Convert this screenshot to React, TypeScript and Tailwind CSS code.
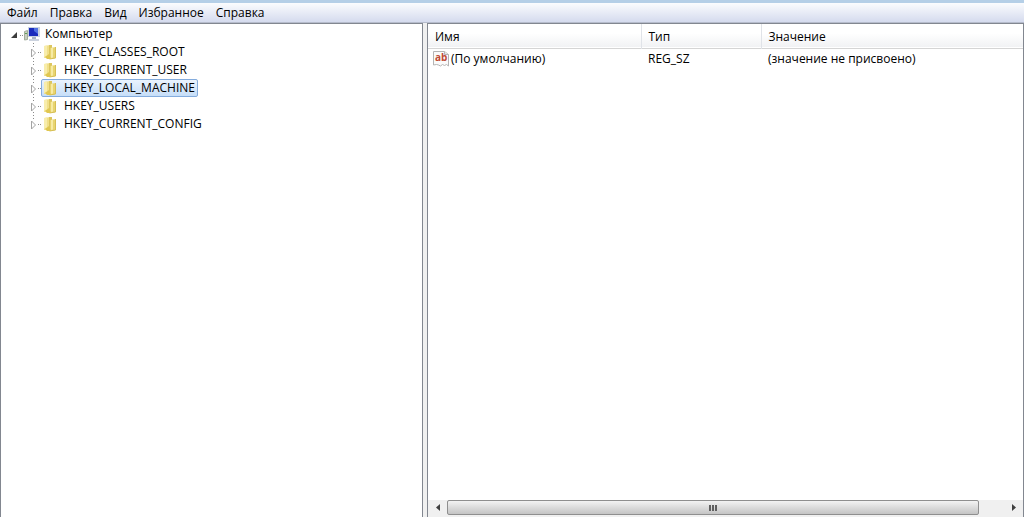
import { useState } from 'react';

const MENU = ['Файл', 'Правка', 'Вид', 'Избранное', 'Справка'];

const HIVES = [
  'HKEY_CLASSES_ROOT',
  'HKEY_CURRENT_USER',
  'HKEY_LOCAL_MACHINE',
  'HKEY_USERS',
  'HKEY_CURRENT_CONFIG',
];

const VALUES = [{ name: '(По умолчанию)', type: 'REG_SZ', data: '(значение не присвоено)' }];

function ComputerIcon() {
  return (
    <svg width="17" height="16" viewBox="0 0 17 16" className="shrink-0" aria-hidden="true">
      <path d="M.5 5.500l3-1v9l-3 .500z" fill="#c9d0c0" stroke="#a3ad9b" />
      <path d="M1 7.500h2" stroke="#5f9f5a" />
      <path d="M4 1h12v10H4z" fill="#c9d2e2" />
      <path d="M5 2h9v8H5z" fill="#1a2bbd" />
      <path d="M10 2h4v6l-4-3z" fill="#4f6fe0" />
      <path d="M8 11h4v2H8z" fill="#a9b4c6" />
      <path d="M5 13h10v2H5z" fill="#ccd3df" />
    </svg>
  );
}

function FolderIcon() {
  return (
    <svg width="16" height="16" viewBox="0 0 16 16" className="shrink-0" aria-hidden="true">
      <path d="M2 2l6-1v12l-6 1z" fill="#f1e08a" />
      <path d="M2 2l3-.500v10L2 13z" fill="#f8edac" />
      <path d="M7 1h3v11l-3 2z" fill="#dcc65f" />
      <path d="M8 4l6-1v11l-6 1z" fill="#e8d470" />
      <path d="M9 4l2-.500v10L9 14z" fill="#f7eba4" />
      <path d="M13.500 3v11l-6 1" fill="none" stroke="#d6bf55" />
      <path d="M3 13l4-3 2 5H5z" fill="#e0c751" />
    </svg>
  );
}

function StringIcon() {
  return (
    <svg width="16" height="16" viewBox="0 0 16 16" className="shrink-0" aria-hidden="true">
      <path
        d="M.500.500h11l4 3v11.500l-2-1.500-2 1-2-1-2 1.500-2-1-2-.500-3 .500z"
        fill="#fafafa"
        stroke="#b4b4b4"
      />
      <path d="M11.500.500v3h4" fill="#e4e4e4" stroke="#b4b4b4" />
      <text
        x="2"
        y="10"
        fontSize="10"
        fontWeight="700"
        fontFamily="'Open Sans', sans-serif"
        fill="#bf4a35"
      >
        ab
      </text>
    </svg>
  );
}

function HiveRow({
  name,
  last,
  selected,
  onSelect,
}: {
  name: string;
  last: boolean;
  selected: boolean;
  onSelect: () => void;
}) {
  return (
    <li className="flex h-[18px] items-center pl-7">
      <svg width="12" height="18" viewBox="0 0 12 18" className="shrink-0" aria-hidden="true">
        <path
          d={last ? 'M4.500 0v4' : 'M4.500 0v4M4.500 15v3'}
          stroke="#8a8a8a"
          strokeDasharray="1 2"
        />
        <path d="M2.500 6v8l4-4z" fill="#fff" stroke="#a3a3a3" />
        <path d="M9 9.500h3" stroke="#8a8a8a" strokeDasharray="1 1" />
      </svg>
      <button
        type="button"
        onClick={onSelect}
        className={`flex h-[18px] items-center gap-1 rounded-xs border pr-0.5 ${
          selected
            ? 'border-[#84acdd] bg-linear-to-b from-[#eaf3fd] to-[#c6def8]'
            : 'border-transparent'
        }`}
      >
        <FolderIcon />
        <span className="pl-0.5">{name}</span>
      </button>
    </li>
  );
}

function Tree() {
  const [selected, setSelected] = useState('HKEY_LOCAL_MACHINE');

  return (
    <nav
      aria-label="Компьютер"
      className="w-[423px] shrink-0 border-x border-t border-[#828790] bg-white pt-px"
    >
      <div className="flex h-[18px] items-center pl-2">
        <svg width="15" height="18" viewBox="0 0 15 18" className="shrink-0" aria-hidden="true">
          <path d="M8 7v6H2z" fill="#3c3c3c" />
          <path d="M11 10.500h4" stroke="#8a8a8a" strokeDasharray="1 1" />
        </svg>
        <ComputerIcon />
        <span className="pl-1">Компьютер</span>
      </div>
      <ul>
        {HIVES.map((name, i) => (
          <HiveRow
            key={name}
            name={name}
            last={i === HIVES.length - 1}
            selected={name === selected}
            onSelect={() => setSelected(name)}
          />
        ))}
      </ul>
    </nav>
  );
}

function ScrollBar() {
  return (
    <div className="flex h-[17px] shrink-0 items-start bg-[#f0f0f0]">
      <button type="button" aria-label="Влево" className="flex h-[15px] w-[19px] items-center justify-center">
        <svg width="4" height="7" viewBox="0 0 4 7" aria-hidden="true">
          <path d="M4 0v7L0 3.500z" fill="#404040" />
        </svg>
      </button>
      <div className="flex flex-1 pr-[26px]">
        <div className="flex h-[15px] flex-1 items-center justify-center gap-px rounded-xs border border-[#8f8f8f] bg-linear-to-b from-[#f3f3f3] to-[#c4c4c4]">
          <span className="h-1.5 w-0.5 bg-[#606060]" />
          <span className="h-1.5 w-0.5 bg-[#606060]" />
          <span className="h-1.5 w-0.5 bg-[#606060]" />
        </div>
      </div>
      <button type="button" aria-label="Вправо" className="flex h-[15px] w-[18px] items-center justify-center">
        <svg width="4" height="7" viewBox="0 0 4 7" aria-hidden="true">
          <path d="M0 0v7l4-3.500z" fill="#404040" />
        </svg>
      </button>
    </div>
  );
}

function ValueList() {
  return (
    <main className="flex min-w-0 flex-1 flex-col border-x border-t border-[#828790] bg-white">
      <div className="flex-1">
        <table className="w-full table-fixed border-collapse text-left">
          <thead>
            <tr className="h-[24px] border-b border-[#d5d5d5] bg-linear-to-b from-white from-40% to-[#f1f2f4]">
              <th className="w-[213px] border-r border-[#e0e3e8] pt-0.5 pl-[7px] font-normal">Имя</th>
              <th className="w-[120px] border-r border-[#e0e3e8] pt-0.5 pl-[7px] font-normal">Тип</th>
              <th className="pt-0.5 pl-[7px] font-normal">Значение</th>
            </tr>
          </thead>
          <tbody>
            {VALUES.map((value) => (
              <tr key={value.name} className="h-[20px]">
                <td className="pt-0.5 pl-[5px]">
                  <span className="flex items-center gap-0.5">
                    <StringIcon />
                    {value.name}
                  </span>
                </td>
                <td className="pt-0.5 pl-[7px]">{value.type}</td>
                <td className="pt-0.5 pl-[7px]">{value.data}</td>
              </tr>
            ))}
          </tbody>
        </table>
      </div>
      <ScrollBar />
    </main>
  );
}

export default function App() {
  return (
    <div className="flex h-screen flex-col bg-[#f0f0f0] font-['Open_Sans','Noto_Sans',sans-serif] text-[12px] leading-4 text-black">
      <header className="border-t-3 border-[#b5cfe7]">
        <div className="flex h-[20px] items-center border-b border-[#b6bccc] bg-linear-to-b from-[#fbfcfe] to-[#d5dbee] pl-[7px]">
          {MENU.map((item) => (
            <button key={item} type="button" className="pr-3">
              {item}
            </button>
          ))}
        </div>
      </header>
      <div className="flex min-h-0 flex-1 gap-1">
        <Tree />
        <ValueList />
      </div>
    </div>
  );
}
